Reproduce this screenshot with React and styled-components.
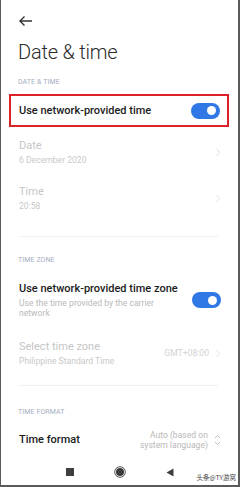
import React from 'react';
import styled, { createGlobalStyle } from 'styled-components';

const GlobalStyle = createGlobalStyle`
  html, body {
    margin: 0;
    padding: 0;
    background: #ffffff;
  }
  * {
    box-sizing: border-box;
  }
`;

const Screen = styled.div`
  width: 240px;
  height: 487px;
  background: #ffffff;
  border-left: 1px solid #5a5a5a;
  border-right: 2px solid #5a5a5a;
  border-bottom: 2px solid #5a5a5a;
  font-family: Roboto, "Noto Sans", "Noto Sans CJK SC", sans-serif;
  display: flex;
  flex-direction: column;
  overflow: hidden;
`;

const TopBar = styled.div`
  height: 34px;
  padding: 8px 0 0 17px;
  display: flex;
  align-items: center;
`;

const Title = styled.h1`
  margin: 4px 0 0 17px;
  font-size: 20px;
  font-weight: 300;
  color: #2b2b2b;
  line-height: 28px;
  letter-spacing: -0.2px;
`;

const SectionLabel = styled.div`
  padding: 0 17px;
  font-size: 7px;
  color: #a4aec0;
  letter-spacing: 0.1px;
  height: 14px;
  display: flex;
  align-items: center;
  margin-top: ${p => p.mt || 0}px;
`;

const Highlight = styled.div`
  margin: 5px 9px 0 8px;
  border: 2px solid #dc2128;
  height: 33px;
  display: flex;
  align-items: center;
  padding: 0 7px 0 8px;
`;

const Row = styled.div`
  display: flex;
  align-items: center;
  justify-content: space-between;
  padding: 0 17px 0 18px;
  height: ${p => p.h}px;
  margin-top: ${p => p.mt || 0}px;
`;

const TextCol = styled.div`
  display: flex;
  flex-direction: column;
  gap: ${p => p.gap || 3}px;
`;

const RowTitle = styled.div`
  font-size: 11px;
  font-weight: ${p => (p.dim ? 400 : 500)};
  color: ${p => (p.dim ? '#c6c6c6' : '#1c1c1c')};
  line-height: 1.2;
  white-space: nowrap;
`;

const RowSub = styled.div`
  font-size: 8.6px;
  color: ${p => p.color || '#c9c9c9'};
  line-height: 10px;
  max-width: ${p => p.maxw || 'none'};
`;

const Spacer = styled.div`
  flex: 1;
`;

const Toggle = styled.div`
  width: 29px;
  height: 16px;
  border-radius: 8px;
  background: #3078e6;
  position: relative;
  flex-shrink: 0;
  &::after {
    content: '';
    position: absolute;
    right: 4px;
    top: 3.5px;
    width: 9px;
    height: 9px;
    border-radius: 50%;
    background: #ffffff;
  }
`;

const RightValue = styled.div`
  font-size: 8.6px;
  color: ${p => p.color || '#cfcfcf'};
  text-align: right;
  line-height: 10px;
  margin-right: 6px;
`;

const Divider = styled.div`
  height: 1px;
  background: #f0f0f0;
  margin: ${p => p.mt || 0}px 20px 0 18px;
`;

const NavBar = styled.div`
  margin-top: auto;
  height: 26px;
  display: flex;
  align-items: center;
  justify-content: center;
  gap: 40px;
  position: relative;
`;

const Watermark = styled.span`
  position: absolute;
  right: 2px;
  bottom: 3px;
  font-size: 6.5px;
  color: #444;
  font-family: "Noto Sans CJK SC", sans-serif;
`;

const Chevron = ({ color = '#d8d8d8' }) => (
  <svg width="6" height="9" viewBox="0 0 6 9">
    <path d="M1.5 1 L4.5 4.5 L1.5 8" fill="none" stroke={color} strokeWidth="1" />
  </svg>
);

const UpDown = () => (
  <svg width="7" height="12" viewBox="0 0 7 12">
    <path d="M1 4 L3.5 1.5 L6 4" fill="none" stroke="#bdbdbd" strokeWidth="1" />
    <path d="M1 8 L3.5 10.5 L6 8" fill="none" stroke="#bdbdbd" strokeWidth="1" />
  </svg>
);

const BackArrow = () => (
  <svg width="15" height="12" viewBox="0 0 15 12">
    <path d="M14 6 H2 M6.5 1.5 L2 6 L6.5 10.5" fill="none" stroke="#333" strokeWidth="1.4" />
  </svg>
);

export default function App() {
  return (
    <>
      <GlobalStyle />
      <Screen>
        <TopBar>
          <BackArrow />
        </TopBar>
        <Title>Date &amp; time</Title>
        <SectionLabel mt={9}>DATE &amp; TIME</SectionLabel>
        <Highlight>
          <RowTitle>Use network-provided time</RowTitle>
          <Spacer />
          <Toggle />
        </Highlight>

        <Row h={46} mt={2}>
          <TextCol>
            <RowTitle dim>Date</RowTitle>
            <RowSub>6 December 2020</RowSub>
          </TextCol>
          <Chevron color="#e0e0e0" />
        </Row>
        <Row h={46}>
          <TextCol>
            <RowTitle dim>Time</RowTitle>
            <RowSub>20:58</RowSub>
          </TextCol>
          <Chevron color="#e0e0e0" />
        </Row>

        <Divider mt={15} />

        <SectionLabel mt={16}>TIME ZONE</SectionLabel>
        <Row h={46} mt={10}>
          <TextCol gap={2}>
            <RowTitle>Use network-provided time zone</RowTitle>
            <RowSub color="#b9b9b9" maxw="152px">Use the time provided by the carrier network</RowSub>
          </TextCol>
          <Toggle />
        </Row>
        <Row h={46} mt={7}>
          <TextCol>
            <RowTitle dim>Select time zone</RowTitle>
            <RowSub>Philippine Standard Time</RowSub>
          </TextCol>
          <Spacer />
          <RightValue color="#d2d2d2">GMT+08:00</RightValue>
          <Chevron color="#e0e0e0" />
        </Row>

        <Divider mt={9} />

        <SectionLabel mt={19}>TIME FORMAT</SectionLabel>
        <Row h={38} mt={2}>
          <RowTitle>Time format</RowTitle>
          <Spacer />
          <RightValue color="#b8b8b8">
            Auto (based on
            <br />
            system language)
          </RightValue>
          <UpDown />
        </Row>

        <NavBar>
          <svg width="8" height="8" viewBox="0 0 8 8">
            <rect x="0" y="0" width="8" height="8" fill="#3f3f3f" />
          </svg>
          <svg width="12" height="12" viewBox="0 0 12 12">
            <circle cx="6" cy="6" r="5.3" fill="none" stroke="#555" strokeWidth="1" />
            <circle cx="6" cy="6" r="4" fill="#3a3a3a" />
          </svg>
          <svg width="8" height="9" viewBox="0 0 8 9">
            <path d="M7.5 0.5 V8.5 L0.5 4.5 Z" fill="#3f3f3f" />
          </svg>
          <Watermark>头条@TY游窝</Watermark>
        </NavBar>
      </Screen>
    </>
  );
}
